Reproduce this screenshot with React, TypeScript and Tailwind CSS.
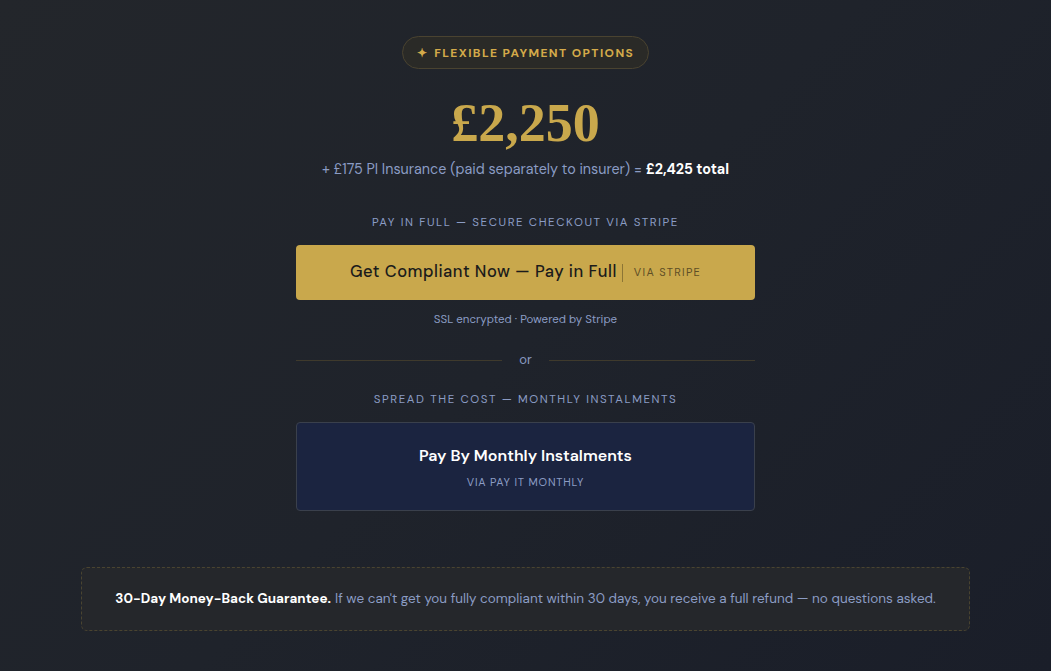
export default function App() {
  const sans = { fontFamily: '"DM Sans", Inter, "Noto Sans", sans-serif' };
  return (
    <div
      className="min-h-[671px] w-full bg-[linear-gradient(135deg,#23262b_0%,#1f232b_50%,#1a1e29_100%)] flex flex-col items-center pt-[36px] text-[#8b9cc4]"
      style={sans}
    >
      <div className="h-[33px] px-[14px] rounded-full border border-[#4a4330] bg-[#2a2a27] flex items-center gap-[6px] text-[#d4aa4a] text-[12px] font-bold tracking-[1.4px]">
        <span className="text-[12px]">✦</span>
        <span>FLEXIBLE PAYMENT OPTIONS</span>
      </div>

      <div
        className="mt-[22px] text-[54px] leading-[64px] font-bold text-[#c9a84c]"
        style={{ fontFamily: '"Liberation Serif", "DejaVu Serif", serif' }}
      >
        £2,250
      </div>

      <div className="mt-[4px] text-[14.3px] leading-[20px] text-[#8b9cc4]">
        + £175 PI Insurance (paid separately to insurer) ={" "}
        <span className="font-bold text-white">£2,425 total</span>
      </div>

      <div className="w-[459px] flex flex-col items-center">
        <div className="mt-[36px] text-[11.5px] leading-[16px] tracking-[1.6px] text-[#8b9cc4]">
          PAY IN FULL — SECURE CHECKOUT VIA STRIPE
        </div>
        <div className="mt-[14px] w-full h-[55px] rounded-[4px] bg-[#c9a84c] flex items-center justify-center">
          <span className="text-[16.5px] font-medium text-[#1b1b1b] tracking-[0.5px]">
            Get Compliant Now — Pay in Full
          </span>
          <span className="ml-[5px] mr-[11px] h-[18px] w-px bg-[#8c7535]" />
          <span className="text-[11px] tracking-[1.3px] text-[#5e4e26]">VIA STRIPE</span>
        </div>
        <div className="mt-[12px] text-[11.5px] leading-[16px] text-[#8b9cc4]">
          SSL encrypted · Powered by Stripe
        </div>

        <div className="mt-[24px] w-full flex items-center gap-[17px]">
          <div className="flex-1 h-px bg-[#3f3a2c]" />
          <span className="text-[13px] leading-[16px] text-[#8b9cc4]">or</span>
          <div className="flex-1 h-px bg-[#3f3a2c]" />
        </div>

        <div className="mt-[24px] text-[11.5px] leading-[16px] tracking-[1.6px] text-[#8b9cc4]">
          SPREAD THE COST — MONTHLY INSTALMENTS
        </div>
        <div className="mt-[14px] w-full h-[89px] rounded-[4px] bg-[#1b2440] border border-[#3a404c] flex flex-col items-center justify-center">
          <div className="text-[16px] leading-[22px] font-semibold text-white">
            Pay By Monthly Instalments
          </div>
          <div className="mt-[8px] text-[11px] leading-[14px] tracking-[0.8px] text-[#8b9cc4]">
            VIA PAY IT MONTHLY
          </div>
        </div>
      </div>

      <div className="mt-[56px] w-[889px] h-[64px] rounded-[6px] border border-dashed border-[#4a4430] bg-[#25272b] flex items-center justify-center text-[13.5px]">
        <span className="font-bold text-white">30-Day Money-Back Guarantee.</span>
        <span className="ml-[4px] text-[#8b9cc4]">
          If we can't get you fully compliant within 30 days, you receive a full refund — no questions asked.
        </span>
      </div>
    </div>
  );
}
